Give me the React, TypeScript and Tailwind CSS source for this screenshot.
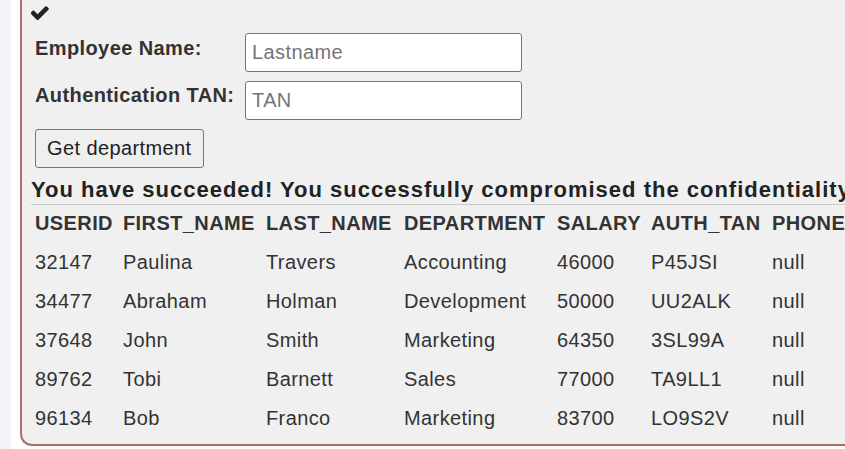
import React from "react";

const rows = [
  ["32147", "Paulina", "Travers", "Accounting", "46000", "P45JSI", "null"],
  ["34477", "Abraham", "Holman", "Development", "50000", "UU2ALK", "null"],
  ["37648", "John", "Smith", "Marketing", "64350", "3SL99A", "null"],
  ["89762", "Tobi", "Barnett", "Sales", "77000", "TA9LL1", "null"],
  ["96134", "Bob", "Franco", "Marketing", "83700", "LO9S2V", "null"],
];

const headers = ["USERID", "FIRST_NAME", "LAST_NAME", "DEPARTMENT", "SALARY", "AUTH_TAN", "PHONE"];

const gridCols = "grid grid-cols-[88px_143px_138px_153px_94px_121px_120px]";

export default function App() {
  return (
    <div
      className="flex h-[449px] w-[845px] overflow-hidden bg-white text-[#333]"
      style={{ fontFamily: '"Liberation Sans", Arial, sans-serif' }}
    >
      <div className="w-[11px] shrink-0 bg-[#f1f3f6]" />
      <div className="w-[9px] shrink-0 bg-white" />
      <div className="flex h-[446px] w-[900px] shrink-0 flex-col rounded-bl-[12px] border-b-[2px] border-l-[2px] border-[#b36a6a] bg-[#f0f0f0] pl-[9px]">
        <div className="h-[27px] pt-[6px]">
          <svg width="18" height="15" viewBox="150 450 1540 1020" fill="#222">
            <path d="M1671 566q0 40-28 68l-724 724-136 136q-28 28-68 28t-68-28l-136-136-362-362q-28-28-28-68t28-68l136-136q28-28 68-28t68 28l294 295 656-657q28-28 68-28t68 28l136 136q28 28 28 68z" />
          </svg>
        </div>
        <div className="mt-[6px] flex flex-col gap-[9px] pl-[4px] text-[20px] tracking-[0.4px]">
          <div className="flex items-start">
            <label className="w-[210px] font-bold">Employee Name:</label>
            <input
              placeholder="Lastname"
              className="h-[39px] w-[277px] rounded-[3px] border border-[#767676] bg-white px-[6px] text-[20px] placeholder:text-[#757575] outline-none"
            />
          </div>
          <div className="flex items-start">
            <label className="-mt-[1px] w-[210px] font-bold">Authentication TAN:</label>
            <input
              placeholder="TAN"
              className="h-[39px] w-[277px] rounded-[3px] border border-[#767676] bg-white px-[6px] text-[20px] placeholder:text-[#757575] outline-none"
            />
          </div>
          <div>
            <button className="h-[39px] rounded-[3px] border border-[#767676] bg-[#efefef] px-[11px] pb-[2px] text-[20px] text-[#222]">
              Get department
            </button>
          </div>
        </div>
        <div className="mt-[10px] h-[27px] whitespace-nowrap border-b border-[#cccccc] text-[22px] font-bold leading-[24px] tracking-[1px] text-[#222]">
          You have succeeded! You successfully compromised the confidentiality of data by viewing internal information that you should not have access to. Well done!
        </div>
        <div className="text-[20px] tracking-[0.4px]">
          <div className={`${gridCols} h-[39px] items-center pb-[4px] font-bold`}>
            {headers.map((h) => (
              <div key={h} className="whitespace-nowrap pl-[4px]">
                {h}
              </div>
            ))}
          </div>
          {rows.map((r) => (
            <div key={r[0]} className={`${gridCols} h-[39px] items-center pb-[4px]`}>
              {r.map((c, i) => (
                <div key={i} className="whitespace-nowrap pl-[4px]">
                  {c}
                </div>
              ))}
            </div>
          ))}
        </div>
      </div>
    </div>
  );
}
